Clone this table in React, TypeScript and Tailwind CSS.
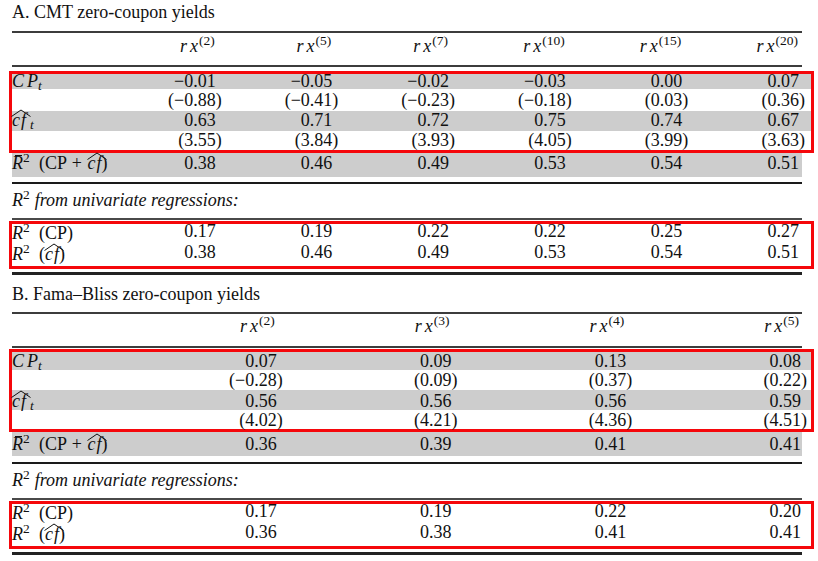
import React from 'react';

type Spec = {
  title: string;
  heads: string[];
  cp: string[];
  cpT: string[];
  cf: string[];
  cfT: string[];
  r2bar: string[];
  r2cp: string[];
  r2cf: string[];
  grid: string;
  numPr: string;
  headPr: string;
  titleCls: string;
  headCls: string;
  box1Cls: string;
  rowCls: string[];
  r2barCls: string;
  ruleCls: string;
  fromCls: string;
  box2Cls: string;
  row2Cls: string;
  bottomCls: string;
};

const panels: Spec[] = [
  {
    title: 'A. CMT zero-coupon yields',
    heads: ['2', '5', '7', '10', '15', '20'],
    cp: ['−0.01', '−0.05', '−0.02', '−0.03', '0.00', '0.07'],
    cpT: ['(−0.88)', '(−0.41)', '(−0.23)', '(−0.18)', '(0.03)', '(0.36)'],
    cf: ['0.63', '0.71', '0.72', '0.75', '0.74', '0.67'],
    cfT: ['(3.55)', '(3.84)', '(3.93)', '(4.05)', '(3.99)', '(3.63)'],
    r2bar: ['0.38', '0.46', '0.49', '0.53', '0.54', '0.51'],
    r2cp: ['0.17', '0.19', '0.22', '0.22', '0.25', '0.27'],
    r2cf: ['0.38', '0.46', '0.49', '0.53', '0.54', '0.51'],
    grid: 'grid grid-cols-[90px_repeat(6,minmax(0,1fr))]',
    numPr: 'pr-[3px]',
    headPr: 'pr-[4px]',
    titleCls: 'h-[31px] leading-[25px]',
    headCls: 'h-[32px] pt-[4px] leading-[19px]',
    box1Cls: 'mt-[4px]',
    rowCls: [
      'h-[15px] leading-[14px]',
      'h-[22px] leading-[23px]',
      'h-[20px] leading-[19px]',
      'h-[19px] leading-[19px]',
    ],
    r2barCls: 'h-[24px] leading-[21px]',
    ruleCls: 'mt-[5px]',
    fromCls: 'h-[34px] pt-[7px] leading-[19px]',
    box2Cls: 'mt-px',
    row2Cls: 'h-[21px] leading-[14px]',
    bottomCls: 'mt-[3px]',
  },
  {
    title: 'B. Fama–Bliss zero-coupon yields',
    heads: ['2', '3', '4', '5'],
    cp: ['0.07', '0.09', '0.13', '0.08'],
    cpT: ['(−0.28)', '(0.09)', '(0.37)', '(0.22)'],
    cf: ['0.56', '0.56', '0.56', '0.59'],
    cfT: ['(4.02)', '(4.21)', '(4.36)', '(4.51)'],
    r2bar: ['0.36', '0.39', '0.41', '0.41'],
    r2cp: ['0.17', '0.19', '0.22', '0.20'],
    r2cf: ['0.36', '0.38', '0.41', '0.41'],
    grid: 'grid grid-cols-[91px_repeat(4,minmax(0,1fr))]',
    numPr: 'pr-px',
    headPr: 'pr-[3px]',
    titleCls: 'h-[37px] pt-[7px] leading-[25px]',
    headCls: 'h-[32px] pt-[3px] leading-[19px]',
    box1Cls: 'mt-px',
    rowCls: [
      'h-[18px] leading-[18px]',
      'h-[20px] leading-[21px]',
      'h-[20px] leading-[23px]',
      'h-[19px] leading-[21px]',
    ],
    r2barCls: 'h-[24px] pt-[2px] leading-[21px]',
    ruleCls: 'mt-[6px]',
    fromCls: 'h-[34px] pt-[7px] leading-[19px]',
    box2Cls: 'mt-px',
    row2Cls: 'h-[21px] leading-[15px]',
    bottomCls: 'mt-[3px]',
  },
];

// closing paren hangs past the column edge so the digits line up
function Num({ v }: { v: string }) {
  if (v.startsWith('(')) {
    return (
      <>
        {v.slice(0, -1)}
        <span className="inline-block w-0">)</span>
      </>
    );
  }
  return <>{v}</>;
}

function Hat({ children }: { children: React.ReactNode }) {
  return (
    <span className="relative inline-block leading-none">
      <svg
        className="absolute -left-px -right-[3px] top-[-2px] h-[8px]"
        viewBox="0 0 20 8"
        preserveAspectRatio="none"
        fill="none"
      >
        <path d="M0.5 7.5 L10 1 L19.5 7.5" stroke="#111" strokeWidth="1" />
      </svg>
      {children}
    </span>
  );
}

const CF = () => (
  <Hat>
    <i>c</i>
    <i className="ml-px">f</i>
  </Hat>
);

const Rx = ({ n }: { n: string }) => (
  <span>
    <i>r</i>
    <i className="ml-[3px]">x</i>
    <sup className="ml-px text-[13.5px]">({n})</sup>
  </span>
);

const R2 = ({ bar }: { bar?: boolean }) => (
  <span className="inline-block w-[27px]">
    <span className="relative inline-block leading-none">
      <i>R</i>
      {bar && <span className="absolute left-[3px] right-[1px] top-[1px] h-px bg-[#111]" />}
    </span>
    <sup className="text-[13.5px]">2</sup>
  </span>
);

function Panel({ p }: { p: Spec }) {
  const cells = (vals: string[], pr: string) =>
    vals.map((v, i) => (
      <div key={i} className={`text-right ${pr}`}>
        <Num v={v} />
      </div>
    ));

  return (
    <div className="ml-[12px] mr-[16px]">
      <div className={p.titleCls}>{p.title}</div>
      <div className="h-[2px] bg-[#3c3c3c]" />
      <div className={`${p.grid} ${p.headCls}`}>
        <div />
        {p.heads.map((h) => (
          <div key={h} className={`text-right ${p.headPr}`}>
            <Rx n={h} />
          </div>
        ))}
      </div>
      <div className="h-[2px] bg-[#3c3c3c]" />

      {/* coefficients + t-stats */}
      <div className={`-ml-[3px] -mr-[12px] border-[3px] border-[#f5070b] ${p.box1Cls}`}>
        <div className={`${p.grid} ${p.rowCls[0]} bg-[#cdcdcd] pr-[9px]`}>
          <div>
            <i>C</i>
            <i className="ml-[3px]">P</i>
            <sub>
              <i>t</i>
            </sub>
          </div>
          {cells(p.cp, p.numPr)}
        </div>
        <div className={`${p.grid} ${p.rowCls[1]} pr-[9px]`}>
          <div />
          {cells(p.cpT, p.numPr)}
        </div>
        <div className={`${p.grid} ${p.rowCls[2]} bg-[#cdcdcd] pr-[9px]`}>
          <div>
            <CF />
            <sub>
              <i className="ml-[4px]">t</i>
            </sub>
          </div>
          {cells(p.cf, p.numPr)}
        </div>
        <div className={`${p.grid} ${p.rowCls[3]} pr-[9px]`}>
          <div />
          {cells(p.cfT, p.numPr)}
        </div>
      </div>

      <div className={`${p.grid} ${p.r2barCls} bg-[#cdcdcd]`}>
        <div className="whitespace-nowrap">
          <R2 bar />
          (CP <span className="mx-[1px]">+</span> <CF />)
        </div>
        {cells(p.r2bar, p.numPr)}
      </div>
      <div className={`h-[2px] bg-[#1a1a1a] ${p.ruleCls}`} />

      <div className={p.fromCls}>
        <i>R</i>
        <sup className="text-[13.5px]">2</sup>
        <i className="ml-[5px]">from univariate regressions:</i>
      </div>
      <div className="h-[2px] bg-[#4a4a4a]" />

      <div className={`-ml-[3px] -mr-[12px] border-[3px] border-[#f5070b] ${p.box2Cls}`}>
        <div className={`${p.grid} ${p.row2Cls} pr-[9px]`}>
          <div className="whitespace-nowrap">
            <R2 />
            (CP)
          </div>
          {cells(p.r2cp, p.numPr)}
        </div>
        <div className={`${p.grid} ${p.row2Cls} pr-[9px]`}>
          <div className="whitespace-nowrap">
            <R2 />
            (<CF />)
          </div>
          {cells(p.r2cf, p.numPr)}
        </div>
      </div>
      <div className={`h-[3px] bg-[#222] ${p.bottomCls}`} />
    </div>
  );
}

export default function App() {
  return (
    <div className="h-[561px] w-[818px] overflow-hidden bg-white font-['Liberation_Serif','Times_New_Roman',serif] text-[18px] text-[#111]">
      {panels.map((p) => (
        <Panel key={p.title} p={p} />
      ))}
    </div>
  );
}
